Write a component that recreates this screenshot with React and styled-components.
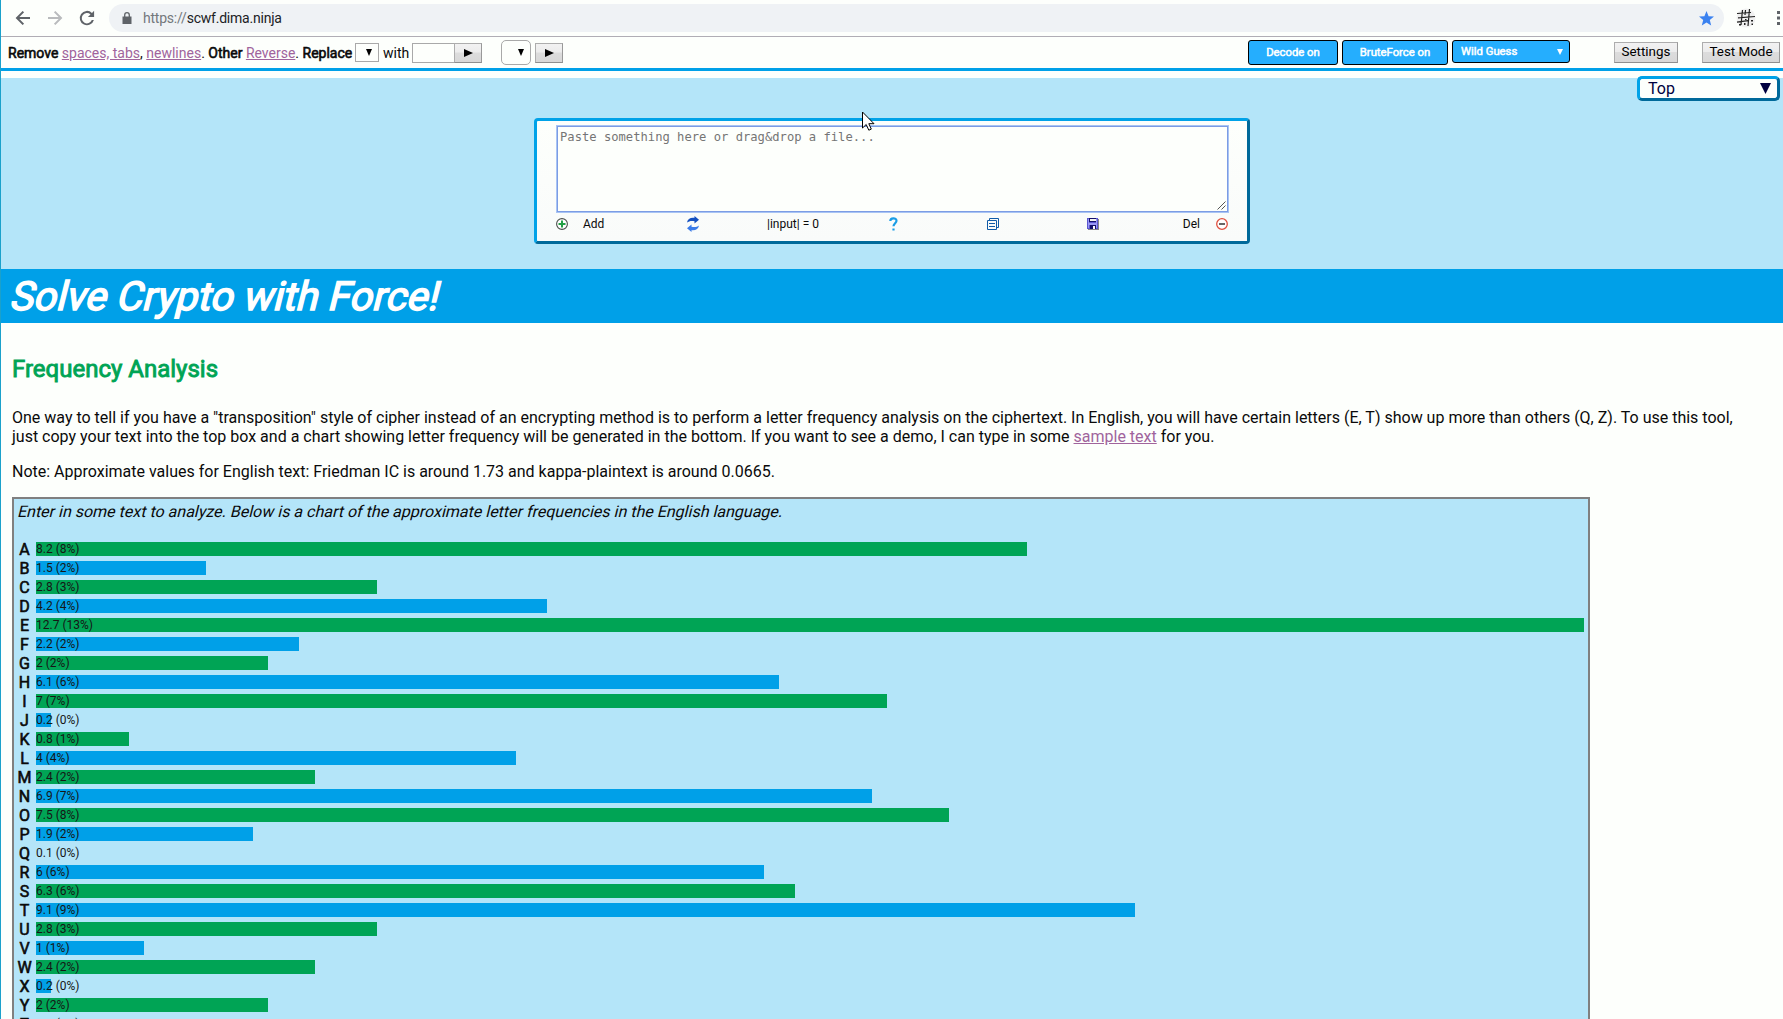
import React from "react";
import styled, { createGlobalStyle } from "styled-components";

const Global = createGlobalStyle`
  * { box-sizing: border-box; }
  html, body { margin: 0; height: 1019px; overflow: hidden; background: #fdfffc; }
  body { font-family: Roboto, "Liberation Sans", sans-serif; font-size: 16px; color: #0a0a0a; }
`;

const Page = styled.div`
  height: 1019px;
  overflow: hidden;
  border-left: 1px solid #1ba1cb;
  display: flex;
  flex-direction: column;
  background: #fdfffc;
`;

const Browser = styled.div`
  height: 37px;
  flex: none;
  border-bottom: 1px solid #b0adb5;
  display: flex;
  align-items: flex-start;
  padding: 4px 0 0 10px;
`;
const NavIcon = styled.svg`
  width: 24px;
  height: 24px;
  margin: 2px 8px 0 0;
  flex: none;
  fill: ${(p) => p.$color || "#5f6368"};
`;
const Address = styled.div`
  width: 1615px;
  height: 28px;
  margin-left: 2px;
  border-radius: 14px;
  background: #eff2f5;
  display: flex;
  align-items: center;
  padding: 0 10px 0 13px;
`;
const Url = styled.div`
  flex: 1;
  margin-left: 11px;
  font-size: 14px;
  letter-spacing: -0.22px;
  line-height: 28px;
  color: #202124;
  span { color: #74787c; }
`;
const Toolbar = styled.div`
  height: 34px;
  flex: none;
  border-bottom: 3px solid #00a0e8;
  display: flex;
  align-items: center;
  padding: 0 3px 0 7px;
  font-size: 14px;
  white-space: nowrap;
`;
const Commands = styled.div`
  width: 347px;
  line-height: 18px;
`;
const Strong = styled.b`
  font-weight: 400;
  -webkit-text-stroke: 0.6px currentColor;
`;
const Link = styled.a`
  color: #a0649c;
  text-decoration: underline;
`;
const MiniSelect = styled.div`
  width: ${(p) => p.$w}px;
  height: ${(p) => (p.$round ? 25 : 19)}px;
  margin-left: ${(p) => p.$ml || 0}px;
  border: 1px solid #a9a9a9;
  border-radius: ${(p) => (p.$round ? 5 : 0)}px;
  display: flex;
  align-items: center;
  justify-content: flex-end;
  padding-right: 6px;
`;
const With = styled.span`
  width: 33px;
  padding-left: 4px;
`;
const TextInput = styled.div`
  width: 42px;
  height: 20px;
  border: 1px solid #a9a9a9;
  border-right: 0;
`;
const PushButton = styled.button`
  width: ${(p) => p.$w}px;
  height: ${(p) => p.$h || 21}px;
  margin: 0 0 ${(p) => (p.$h ? 0 : 1)}px ${(p) => p.$ml || 0}px;
  padding: ${(p) => (p.$h ? 0 : "0 0 1px")};
  border: 1px solid #9c9c9c;
  border-color: #adadad #999 #8f8f8f #adadad;
  background: linear-gradient(#f2f2f2 0%, #ececec 45%, #dcdcdc 50%, #d8d8d8 100%);
  color: #000;
  font: 13.4px/17px Roboto, "Liberation Sans", sans-serif;
  display: flex;
  align-items: center;
  justify-content: center;
`;
const Spacer = styled.div`
  flex: 1;
`;
const BlueButton = styled.button`
  width: ${(p) => p.$w}px;
  height: ${(p) => p.$h || 25}px;
  margin: 0 4px ${(p) => (p.$h ? 2 : 0)}px 0;
  padding: ${(p) => (p.$split ? "1px 6px 0 8px" : "0")};
  border: 1px solid #000;
  border-radius: 3px;
  background: #25aefe;
  color: #fff;
  font: 11.3px/20px Roboto, "Liberation Sans", sans-serif;
  -webkit-text-stroke: 0.5px #fff;
  display: flex;
  align-items: center;
  justify-content: ${(p) => (p.$split ? "space-between" : "center")};
`;
const Hero = styled.div`
  height: 191px;
  margin-top: 7px;
  flex: none;
  background: #b4e5f9;
  position: relative;
  display: flex;
  justify-content: center;
  align-items: flex-start;
  padding-top: 40px;
`;
const TopMenu = styled.div`
  position: absolute;
  right: 3px;
  top: -2px;
  width: 143px;
  height: 25px;
  border: 3px solid;
  border-color: #00a2e8 #00699a #00699a #00a2e8;
  border-radius: 5px;
  background: #fdfffc;
  color: #000040;
  font-size: 16px;
  line-height: 19px;
  display: flex;
  align-items: center;
  justify-content: space-between;
  padding: 0 6px 0 8px;
`;
const Pointer = styled.svg`
  position: absolute;
  left: 861px;
  top: 33px;
  width: 13px;
  height: 20px;
`;
const Panel = styled.div`
  width: 716px;
  height: 126px;
  border: 3px solid;
  border-color: #00a2e8 #00699a #00699a #00a2e8;
  border-radius: 4px;
  background: linear-gradient(#fdfffc, #f9fbfa);
  display: flex;
  flex-direction: column;
  padding: 4px 18px 0 19px;
`;
const Input = styled.div`
  height: 88px;
  border: 1px solid #a8c4f4;
  box-shadow: inset 0 0 0 1px #7c9ce4;
  background: #fdfffc;
  color: #757575;
  font: 12.17px/15px "DejaVu Sans Mono", monospace;
  padding: 4px 2px 2px 3px;
  display: flex;
  justify-content: space-between;
`;
const Grip = styled.svg`
  width: 9px;
  height: 9px;
  align-self: flex-end;
`;
const Tools = styled.div`
  display: grid;
  grid-template-columns: 27px 60px repeat(5, 100px) 57px 16px 13px;
  align-items: center;
  height: 22px;
  font-size: 12px;
  white-space: nowrap;
`;
const Cell = styled.div`
  display: flex;
  align-items: center;
  justify-content: ${(p) => p.$align || "flex-start"};
`;
const Title = styled.h1`
  margin: 0;
  height: 54px;
  flex: none;
  background: #00a0e8;
  color: #fff;
  font-size: 40px;
  font-weight: 400;
  line-height: 56px;
  padding-left: 7px;
  -webkit-text-stroke: 1.5px #fff;
`;
const Slanted = styled.span`
  display: inline-block;
  transform: skewX(-14deg);
  transform-origin: 0 78%;
`;
const Content = styled.div`
  padding-left: 11px;
  display: flex;
  flex-direction: column;
  line-height: 19px;
`;
const Heading = styled.h2`
  margin: 32px 0 0;
  font-size: 24px;
  font-weight: 400;
  line-height: 28px;
  color: #00a455;
  -webkit-text-stroke: 0.9px currentColor;
`;
const Para = styled.p`
  margin: ${(p) => p.$mt}px 0 0;
  white-space: nowrap;
`;
const Chart = styled.div`
  width: 1578px;
  height: 560px;
  margin-top: 16px;
  border: 2px solid #808080;
  background: #b4e5f9;
  padding: 3px 4px;
`;
const Caption = styled.div`
  height: 37px;
  margin-left: -1px;
`;
const Row = styled.div`
  height: 19px;
  display: flex;
  align-items: center;
`;
const Letter = styled.div`
  width: 12px;
  margin-right: 6px;
  display: flex;
  justify-content: center;
  padding: 1px 0 0 1px;
  line-height: 19px;
  -webkit-text-stroke: 0.6px currentColor;
`;
const Track = styled.div`
  width: 1548px;
  height: 14px;
`;
const Bar = styled.div`
  height: 14px;
  background: ${(p) => (p.$green ? "#00a455" : "#00a0e8")};
  color: #161616;
  font-size: 12px;
  line-height: 14px;
  white-space: nowrap;
`;

const FREQ = [
  ["A", 8.2], ["B", 1.5], ["C", 2.8], ["D", 4.2], ["E", 12.7], ["F", 2.2], ["G", 2],
  ["H", 6.1], ["I", 7], ["J", 0.2], ["K", 0.8], ["L", 4], ["M", 2.4], ["N", 6.9],
  ["O", 7.5], ["P", 1.9], ["Q", 0.1], ["R", 6], ["S", 6.3], ["T", 9.1], ["U", 2.8],
  ["V", 1], ["W", 2.4], ["X", 0.2], ["Y", 2], ["Z", 0.1],
];

const Down = ({ w = 7, h = 7, color = "#000" }) => (
  <svg width={w} height={h} viewBox="0 0 10 10" preserveAspectRatio="none">
    <path d="M0 0h10L5 10z" fill={color} />
  </svg>
);
const Play = () => (
  <svg width="9" height="8" viewBox="0 0 9 8"><path d="M0 0L9 4L0 8z" fill="#000" /></svg>
);
const HashBadge = styled.svg`
  width: 20px;
  height: 20px;
  margin: 4px 0 0 12px;
`;
const Dots = styled.svg`
  width: 4px;
  height: 16px;
  margin: 6px 0 0 21px;
`;

export default function App() {
  return (
    <Page>
      <Global />
      <Browser>
        <NavIcon viewBox="0 0 24 24">
          <path d="M19 11H8.400l4.700-4.700L11.600 4.900 4.600 12l7 7.100 1.500-1.400L8.400 13H19z" />
        </NavIcon>
        <NavIcon viewBox="0 0 24 24" $color="#b9bbbd">
          <path d="M5 11h10.600l-4.700-4.700 1.500-1.400 7 7.100-7 7.100-1.500-1.400 4.700-4.700H5z" />
        </NavIcon>
        <NavIcon viewBox="0 0 24 24">
          <path d="M17 6.900A7.200 7.200 0 1 0 18.900 14h-2.100a5.200 5.200 0 1 1-1.300-5.600L12.900 11h6.200V4.800z" />
        </NavIcon>
        <Address>
          <svg width="10" height="12" viewBox="0 0 10 12">
            <path d="M.5 4.5h9V12h-9z" fill="#5f6368" />
            <path d="M2.7 5V3a2.3 2.3 0 0 1 4.6 0v2" fill="none" stroke="#5f6368" strokeWidth="1.3" />
          </svg>
          <Url><span>https://</span>scwf.dima.ninja</Url>
          <svg width="15" height="15" viewBox="0 0 15 15">
            <path d="M7.5 0l2.1 5.2 5.4.4-4.2 3.5 1.4 5.5-4.7-3-4.7 3 1.4-5.5L0 5.6l5.4-.4z" fill="#3b82f0" />
          </svg>
        </Address>
        <HashBadge viewBox="0 0 20 20">
          <circle cx="10" cy="10" r="9.5" fill="#f0f0f0" />
          <path d="M1 5.5l14-1M2 9.8l17-1.300M1 14.200l11-1.500M6.500 2L5 17M13.500 1L12 18M9.500 2l-.5 5" stroke="#222" strokeWidth="1.2" fill="none" />
          <path d="M3 16h2v1.5H3zM8 15h1.5v2H8zM15 12h2v1.5h-2zM15.5 15.5H17V17h-1.5zM9 11h1.5v1H9z" fill="#222" />
        </HashBadge>
        <Dots viewBox="0 0 4 16">
          <path d="M0 1h3v3H0zM0 6.5h3v3H0zM0 12h3v3H0z" fill="#5f6368" />
        </Dots>
      </Browser>

      <Toolbar>
        <Commands>
          <Strong>Remove</Strong> <Link>spaces, tabs</Link>, <Link>newlines</Link>. <Strong>Other</Strong>{" "}
          <Link>Reverse</Link>. <Strong>Replace</Strong>
        </Commands>
        <MiniSelect $w={24}><Down w={6} /></MiniSelect>
        <With>with</With>
        <TextInput />
        <PushButton $w={28} $h={20}><Play /></PushButton>
        <MiniSelect $w={30} $ml={19} $round><Down w={6} /></MiniSelect>
        <PushButton $w={28} $h={20} $ml={4}><Play /></PushButton>
        <Spacer />
        <BlueButton $w={90}>Decode on</BlueButton>
        <BlueButton $w={106}>BruteForce on</BlueButton>
        <BlueButton $w={118} $h={23} $split>Wild Guess<Down w={6} h={6} color="#fff" /></BlueButton>
        <PushButton $w={64} $ml={40}>Settings</PushButton>
        <PushButton $w={78} $ml={24}>Test Mode</PushButton>
      </Toolbar>

      <Hero>
        <TopMenu>Top<Down w={11} h={11} color="#000040" /></TopMenu>
        <Panel>
          <Input>
            Paste something here or drag&amp;drop a file...
            <Grip viewBox="0 0 9 9">
              <path d="M.5 8.5l8-8M4.5 8.5l4-4" stroke="#555" fill="none" />
            </Grip>
          </Input>
          <Tools>
            <Cell>
              <svg width="12" height="12" viewBox="0 0 12 12">
                <circle cx="6" cy="6" r="5.4" fill="#fff" stroke="#4a4f4a" strokeWidth="1.1" />
                <path d="M2.5 6h7M6 2.5v7" stroke="#22a045" strokeWidth="2" />
              </svg>
            </Cell>
            <Cell>Add</Cell>
            <Cell $align="center">
              <svg width="12" height="16" viewBox="0 0 12 16">
                <path d="M0 6.5C.5 3 3.5 1.2 7.5 1.8V0L12 3.8 7.5 7.6V5.2C4.5 4.5 2 5 0 6.5z" fill="#1450c0" />
                <path d="M12 9.5c-.5 3.5-3.500 5.300-7.500 4.700V16L0 12.200l4.500-3.800v2.400c3 .7 5.500.2 7.500-1.300z" fill="#3a7be8" />
              </svg>
            </Cell>
            <Cell $align="center">|input| = 0</Cell>
            <Cell $align="center">
              <svg width="9" height="14" viewBox="0 0 9 14">
                <path d="M1.3 4C1.3.5 7.5.5 7.5 3.8C7.5 6 4.5 6.5 4.5 9.3" stroke="#1a9de6" strokeWidth="2.2" fill="none" />
                <path d="M3.4 11.5h2.2v2H3.400z" fill="#1a9de6" />
              </svg>
            </Cell>
            <Cell $align="center">
              <svg width="12" height="12" viewBox="0 0 12 12">
                <path d="M2.5 2.5V.5h9v9h-2M.5 2.5h9v9h-9zM2 5.5h6M2 8.5h6" stroke="#105ba8" fill="none" />
              </svg>
            </Cell>
            <Cell $align="center">
              <svg width="12" height="12" viewBox="0 0 12 12">
                <path d="M1 1h11v11H1z" fill="#888" />
                <path d="M0 0h11v11H0z" fill="#5b57d0" />
                <path d="M1 1h1v9H1zM9 1h1v9H9zM2 5h7v2H2z" fill="#9a98f4" />
                <path d="M2 0h7v4H2z" fill="#14106a" />
                <path d="M3 1h6v2H3z" fill="#f4f6f4" />
                <path d="M3 7h6v4H3z" fill="#14106a" />
                <path d="M6 8h2v3H6z" fill="#fff" />
              </svg>
            </Cell>
            <Cell $align="flex-end">Del</Cell>
            <Cell />
            <Cell>
              <svg width="12" height="12" viewBox="0 0 12 12">
                <circle cx="6" cy="6" r="5.3" fill="#fff" stroke="#e0503f" strokeWidth="1.3" />
                <path d="M3 6h6" stroke="#555" strokeWidth="1.8" />
              </svg>
            </Cell>
          </Tools>
        </Panel>
        <Pointer viewBox="0 0 13 20">
          <path d="M.5 1v16l3.7-3.5 2.6 5.7 2.5-1.1-2.5-5.4H12z" fill="#fff" stroke="#000" />
        </Pointer>
      </Hero>

      <Title><Slanted>Solve Crypto with Force!</Slanted></Title>

      <Content>
        <Heading>Frequency Analysis</Heading>
        <Para $mt={25}>
          One way to tell if you have a "transposition" style of cipher instead of an encrypting method is to perform a
          letter frequency analysis on the ciphertext. In English, you will have certain letters (E, T) show up more
          than others (Q, Z). To use this tool,
          <br />
          just copy your text into the top box and a chart showing letter frequency will be generated in the bottom. If
          you want to see a demo, I can type in some <Link>sample text</Link> for you.
        </Para>
        <Para $mt={16}>
          Note: Approximate values for English text: Friedman IC is around 1.73 and kappa-plaintext is around 0.0665.
        </Para>
        <Chart>
          <Caption>
            <Slanted>
              Enter in some text to analyze. Below is a chart of the approximate letter frequencies in the English
              language.
            </Slanted>
          </Caption>
          {FREQ.map(([letter, value], i) => (
            <Row key={letter}>
              <Letter>{letter}</Letter>
              <Track>
                <Bar $green={i % 2 === 0} style={{ width: `${Math.floor((value / 12.7) * 100)}%` }}>
                  {value} ({Math.round(value)}%)
                </Bar>
              </Track>
            </Row>
          ))}
        </Chart>
      </Content>
    </Page>
  );
}
